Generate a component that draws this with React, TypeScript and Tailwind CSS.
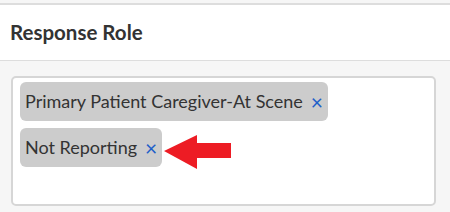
import React from 'react';

interface ChipProps {
  label: string;
}

function Chip({ label }: ChipProps) {
  return (
    <div className="flex items-center h-[39px] pl-[5px] pr-[5px] rounded-[6px] bg-[#cccccc] text-[18px] text-[#333333]">
      <span>{label}</span>
      <span className="ml-[8px] text-[#1f5fc9] text-[21px] leading-none">×</span>
    </div>
  );
}

function PointerArrow() {
  return (
    <svg width="67" height="35" viewBox="0 0 67 35" className="ml-[2px] mt-[7px] shrink-0">
      <polygon points="0,16 33,0 33,8 67,8 67,23 33,23 33,34" fill="#ed1c24" />
    </svg>
  );
}

export default function App() {
  return (
    <div
      className="w-[450px] h-[212px] bg-[#f6f6f6] pt-[3px] overflow-hidden"
      style={{ fontFamily: 'Lato, "Open Sans", sans-serif' }}
    >
      <div className="h-[58px] bg-white border-t-2 border-b border-[#dddddd] flex items-center pl-[10px]">
        <h2 className="text-[20.5px] font-bold text-[#333333]">Response Role</h2>
      </div>

      <div className="px-[11px] pt-[15px]">
        <div className="w-[425px] h-[130px] bg-white border-2 border-[#d6d6d6] rounded-[5px] pt-[4px] px-[7px] flex flex-col items-start gap-[7px]">
          <Chip label="Primary Patient Caregiver-At Scene" />
          <div className="flex items-start">
            <Chip label="Not Reporting" />
            <PointerArrow />
          </div>
        </div>
      </div>
    </div>
  );
}
